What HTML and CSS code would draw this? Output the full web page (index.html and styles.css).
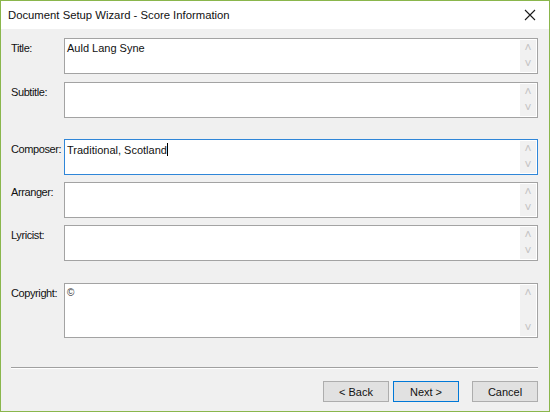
FILE: index.html
```html
<!DOCTYPE html>
<html>
<head>
    <title>Document Setup Wizard</title>
    <link rel="stylesheet" href="styles.css">
</head>
<body>
    <div class="window">
        <div class="titlebar">
            <span class="caption">Document Setup Wizard - Score Information</span>
            <svg class="close" width="12" height="12" viewBox="0 0 12 12">
                <path d="M1 1 L11 11 M11 1 L1 11" stroke="#1a1a1a" stroke-width="1.1" fill="none"/>
            </svg>
        </div>

        <div class="content">
            <div class="field f-title">
                <label>Title:</label>
                <div class="box"><span class="text">Auld Lang Syne</span><div class="scroll"><span>&#708;</span><span>&#709;</span></div></div>
            </div>
            <div class="field f-subtitle">
                <label>Subtitle:</label>
                <div class="box"><span class="text"></span><div class="scroll"><span>&#708;</span><span>&#709;</span></div></div>
            </div>
            <div class="field f-composer">
                <label>Composer:</label>
                <div class="box focused"><span class="text">Traditional, Scotland<i class="caret"></i></span><div class="scroll"><span>&#708;</span><span>&#709;</span></div></div>
            </div>
            <div class="field f-arranger">
                <label>Arranger:</label>
                <div class="box"><span class="text"></span><div class="scroll"><span>&#708;</span><span>&#709;</span></div></div>
            </div>
            <div class="field f-lyricist">
                <label>Lyricist:</label>
                <div class="box"><span class="text"></span><div class="scroll"><span>&#708;</span><span>&#709;</span></div></div>
            </div>
            <div class="field f-copyright">
                <label>Copyright:</label>
                <div class="box tall"><span class="text copy">&copy;</span><div class="scroll"><span>&#708;</span><span>&#709;</span></div></div>
            </div>

            <div class="separator"></div>

            <div class="buttons">
                <button class="btn">&lt; Back</button>
                <button class="btn default">Next &gt;</button>
                <button class="btn cancel">Cancel</button>
            </div>
        </div>
    </div>
</body>
</html>
```

FILE: styles.css
```css
* {
  box-sizing: border-box;
}

body {
  margin: 0;
  font-family: "Liberation Sans", Arial, sans-serif;
  font-size: 11px;
  color: #000;
}

.window {
  width: 550px;
  height: 412px;
  border: 1px solid #8ab64c;
  display: flex;
  flex-direction: column;
  background: #f0f0f0;
}

.titlebar {
  height: 28px;
  background: #fff;
  display: flex;
  align-items: center;
  justify-content: space-between;
  padding: 0 13px 0 7px;
}

.caption {
  font-size: 11.3px;
  color: #111;
}

.content {
  flex: 1;
  padding: 9px 11px 0 10px;
}

.field {
  display: flex;
}

.field label {
  flex: none;
  width: 53px;
  padding-top: 4px;
  color: #111;
  white-space: nowrap;
  letter-spacing: -0.4px;
}

.box {
  flex: 1;
  height: 36px;
  background: #fff;
  border: 1px solid #a3a3a3;
  display: flex;
  justify-content: space-between;
}

.box.focused {
  border-color: #2f86d8;
}

.box.tall {
  height: 55px;
}

.text {
  padding: 3px 0 0 2px;
  color: #111;
}

.caret {
  display: inline-block;
  width: 1px;
  height: 13px;
  background: #000;
  vertical-align: -2px;
}

.copy {
  font-size: 10px;
  color: #333;
}

.scroll {
  width: 16px;
  margin: 1px;
  background: #f1f1f1;
  display: flex;
  flex-direction: column;
  justify-content: space-between;
  align-items: center;
  color: #c3c3c3;
  font-size: 12px;
  line-height: 16px;
}

.f-subtitle { margin-top: 8px; }
.f-composer { margin-top: 21px; }
.f-arranger { margin-top: 7px; }
.f-lyricist { margin-top: 7px; }
.f-copyright { margin-top: 22px; }

.separator {
  margin-top: 29px;
  height: 2px;
  border-top: 1px solid #a0a0a0;
  border-bottom: 1px solid #fff;
}

.buttons {
  display: flex;
  justify-content: flex-end;
  margin-top: 12px;
}

.btn {
  width: 66px;
  height: 21px;
  border: 1px solid #adadad;
  background: #e1e1e1;
  font-family: "Liberation Sans", Arial, sans-serif;
  font-size: 11px;
  color: #111;
  margin-left: 4px;
  padding: 0;
}

.btn.default {
  border-color: #0078d7;
}

.btn.cancel {
  margin-left: 13px;
}
```
